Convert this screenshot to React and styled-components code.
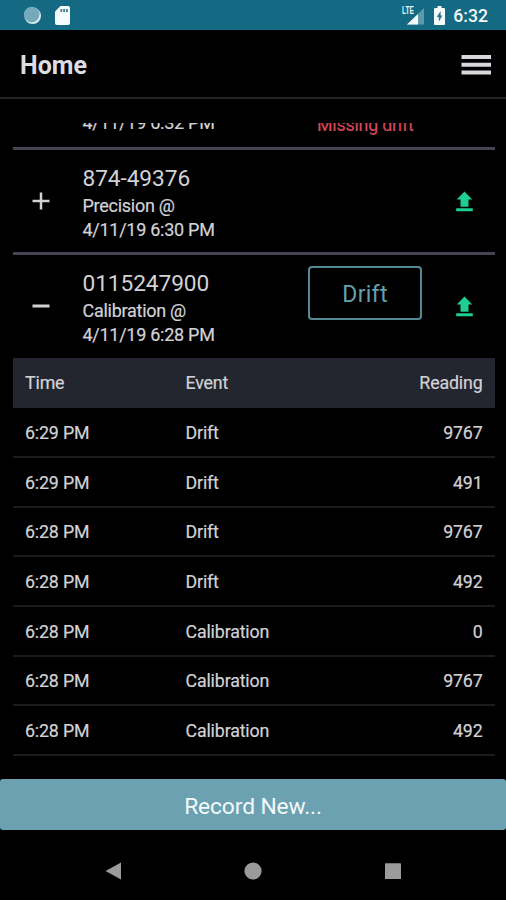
import React from "react";
import styled, { createGlobalStyle } from "styled-components";

const GlobalStyle = createGlobalStyle`
  * { box-sizing: border-box; }
  body { margin: 0; background: #000; font-family: Roboto, sans-serif; color: #d2d2d6; }
`;

const Screen = styled.div`
  width: 506px;
  height: 900px;
  display: flex;
  flex-direction: column;
  overflow: hidden;
  background: #000;
`;

const StatusBar = styled.div`
  height: 30px;
  flex: none;
  display: flex;
  justify-content: space-between;
  background: #136a82;
  padding: 0 18px 0 23px;
`;

const StatusGroup = styled.div`
  display: flex;
  align-items: center;
`;

const Clock = styled.span`
  font-size: 17.6px;
  font-weight: 500;
  line-height: 30px;
  color: #f4fbfd;
  padding-top: 2px;
  margin-left: 8px;
`;

const Header = styled.header`
  height: 69px;
  flex: none;
  display: flex;
  align-items: center;
  justify-content: space-between;
  padding: 3px 15px 0 20px;
  border-bottom: 2px solid #222526;
`;

const Title = styled.h1`
  margin: 0;
  padding-top: 2px;
  font-size: 25px;
  font-weight: 700;
  line-height: 30px;
  color: #dcdce2;
`;

const MenuButton = styled.button`
  display: flex;
  padding: 0;
  border: 0;
  background: none;
`;

const List = styled.main`
  margin: 24px 11px 0 13px;
  height: 656px;
  flex: none;
  display: flex;
  flex-direction: column;
  justify-content: flex-end;
  overflow: hidden;
  padding-bottom: 23px;
`;

const Item = styled.section`
  flex: none;
  height: ${(p) => p.$height}px;
  display: grid;
  grid-template-columns: 56px 1fr 114px 73px;
  border-top: 3px solid #454653;
  padding-top: ${(p) => p.$top ?? 13}px;
`;

const ItemIcon = styled.div`
  display: flex;
  justify-content: center;
  padding-top: 29px;
  height: 50px;
`;

const Details = styled.div`
  padding: 1px 0 0 13.5px;
  white-space: nowrap;
`;

const Serial = styled.div`
  font-size: 22.7px;
  line-height: 30px;
  letter-spacing: -0.08px;
`;

const Detail = styled.div`
  font-size: 18px;
  line-height: 24px;
  -webkit-text-stroke: 0.2px currentColor;
  letter-spacing: -0.27px;
`;

const Warning = styled.div`
  padding: 44px 0 0 9px;
  font-size: 17.8px;
  line-height: 49px;
  letter-spacing: -0.2px;
  color: #d5485b;
  white-space: nowrap;
  -webkit-text-stroke: 0.2px currentColor;
`;

const DriftButton = styled.button`
  width: 114px;
  height: 54px;
  margin-top: -2px;
  padding: 4px 0 0;
  border: 2px solid #548894;
  border-radius: 4px;
  background: #000;
  color: #66a0ae;
  font: 400 23px/30px Roboto, sans-serif;
  letter-spacing: 0.3px;
`;

const Readings = styled.div`
  flex: none;
  font-size: 17.8px;
  letter-spacing: -0.15px;
  -webkit-text-stroke: 0.2px currentColor;
`;

const Row = styled.div`
  height: ${(p) => (p.$head ? 50.5 : 49.7)}px;
  display: grid;
  grid-template-columns: 160.5px 1fr 100px;
  align-items: center;
  padding: ${(p) => (p.$head ? 0 : 1)}px 12.5px 0 12px;
  background: ${(p) => (p.$head ? "#23252f" : "transparent")};
  border-bottom: ${(p) => (p.$head ? "0" : "2px solid #191b1c")};
`;

const Reading = styled.span`
  text-align: right;
`;

const RecordButton = styled.button`
  flex: none;
  height: 51px;
  padding: 4px 0 0;
  border: 0;
  border-radius: 3px;
  background: #6ba1b1;
  color: #f4fafc;
  font: 400 22.8px/30px Roboto, sans-serif;
  letter-spacing: -0.12px;
`;

const NavBar = styled.nav`
  flex: 1;
  display: flex;
  align-items: center;
  justify-content: space-between;
  padding: 12px 104px 0 104px;
`;

const Sync = () => (
  <svg width="19" height="19" viewBox="0 0 19 19">
    <circle cx="9.7" cy="9.8" r="8.3" fill="#d9edf2" />
    <circle cx="8.7" cy="8.6" r="7.8" fill="#76aabb" />
  </svg>
);

const SdCard = () => (
  <svg width="15" height="19" viewBox="0 0 15 19">
    <path d="M5.5 0H13a2 2 0 0 1 2 2v15a2 2 0 0 1-2 2H2a2 2 0 0 1-2-2V5.5Z" fill="#f5fbfd" />
    <path d="M5.4 3h1.8v3H5.4ZM8.2 3H10v3H8.2ZM11 3h1.8v3H11Z" fill="#477f91" />
  </svg>
);

const LteLabel = styled.text`
  font: 700 10px "Liberation Sans", sans-serif;
  fill: #e8f5f8;
`;

const Signal = () => (
  <svg width="24" height="22" viewBox="0 0 24 22">
    <path d="M23 4V20.5H6Z" fill="#5c9aab" />
    <path d="M17 10v10.5H6Z" fill="#f5fbfd" />
    <LteLabel x="1" y="10" textLength="12" lengthAdjust="spacingAndGlyphs">LTE</LteLabel>
  </svg>
);

const Battery = () => (
  <svg width="11" height="19" viewBox="0 0 11 19">
    <path d="M3.5 0h4v2H10a1 1 0 0 1 1 1v15a1 1 0 0 1-1 1H1a1 1 0 0 1-1-1V3a1 1 0 0 1 1-1h2.5Z" fill="#f5fbfd" />
    <path d="M6.6 5 2.8 11h2v4.8L8.4 9.6H6.6Z" fill="#28758b" />
  </svg>
);

const Menu = () => (
  <svg width="30" height="20" viewBox="0 0 30 20" fill="#d8d8dd">
    <path d="M.5 0H30v4H.5ZM.5 7.8H30v4H.5ZM.5 15.6H30v4H.5Z" />
  </svg>
);

const Toggle = ({ open }) => (
  <svg width="18" height="18" viewBox="0 0 18 18" stroke="#d2d2d6">
    <path d="M.5 9h17" strokeWidth={open ? 3 : 2.5} />
    {!open && <path d="M9 .5v17" strokeWidth="2.5" />}
  </svg>
);

const Upload = () => (
  <svg width="17" height="21" viewBox="0 0 17 21" fill="#1ed08f">
    <path d="M8.5 .5 16.3 8.5H12.5V15.8H4.5V8.5H.7ZM.2 17.3h16.6v3H.2Z" />
  </svg>
);

const UploadCell = styled.div`
  display: flex;
  justify-content: flex-end;
  padding: 27.5px 22px 0 0;
`;

const SdSlot = styled.span`
  display: flex;
  margin-left: 13px;
`;

const BatterySlot = styled.span`
  display: flex;
  margin-left: 9px;
`;

const NavIcon = ({ kind }) => (
  <svg width="18" height="18" viewBox="0 0 18 18" fill="#9b9b9b">
    {kind === "back" && <path d="M1.5 9 17 .5v17Z" />}
    {kind === "home" && <circle cx="9" cy="9" r="8.6" />}
    {kind === "recent" && <rect x="1" y="1.3" width="16" height="15.8" rx=".7" />}
  </svg>
);

const readings = [
  ["6:29 PM", "Drift", "9767"],
  ["6:29 PM", "Drift", "491"],
  ["6:28 PM", "Drift", "9767"],
  ["6:28 PM", "Drift", "492"],
  ["6:28 PM", "Calibration", "0"],
  ["6:28 PM", "Calibration", "9767"],
  ["6:28 PM", "Calibration", "492"],
];

export default function App() {
  return (
    <Screen>
      <GlobalStyle />
      <StatusBar>
        <StatusGroup>
          <Sync />
          <SdSlot><SdCard /></SdSlot>
        </StatusGroup>
        <StatusGroup>
          <Signal />
          <BatterySlot><Battery /></BatterySlot>
          <Clock>6:32</Clock>
        </StatusGroup>
      </StatusBar>
      <Header>
        <Title>Home</Title>
        <MenuButton aria-label="Menu"><Menu /></MenuButton>
      </Header>
      <List>
        <Item $height={106} $top={12}>
          <ItemIcon />
          <Details>
            <Serial>&nbsp;</Serial>
            <Detail>&nbsp;</Detail>
            <Detail>4/11/19 6:32 PM</Detail>
          </Details>
          <Warning>Missing drift</Warning>
        </Item>
        <Item $height={105}>
          <ItemIcon><Toggle /></ItemIcon>
          <Details>
            <Serial>874-49376</Serial>
            <Detail>Precision @</Detail>
            <Detail>4/11/19 6:30 PM</Detail>
          </Details>
          <span />
          <UploadCell><Upload /></UploadCell>
        </Item>
        <Item $height={105.5}>
          <ItemIcon><Toggle open /></ItemIcon>
          <Details>
            <Serial>0115247900</Serial>
            <Detail>Calibration @</Detail>
            <Detail>4/11/19 6:28 PM</Detail>
          </Details>
          <DriftButton>Drift</DriftButton>
          <UploadCell><Upload /></UploadCell>
        </Item>
        <Readings>
          <Row $head>
            <span>Time</span>
            <span>Event</span>
            <Reading>Reading</Reading>
          </Row>
          {readings.map(([time, event, value], i) => (
            <Row key={i}>
              <span>{time}</span>
              <span>{event}</span>
              <Reading>{value}</Reading>
            </Row>
          ))}
        </Readings>
      </List>
      <RecordButton>Record New...</RecordButton>
      <NavBar>
        <NavIcon kind="back" />
        <NavIcon kind="home" />
        <NavIcon kind="recent" />
      </NavBar>
    </Screen>
  );
}
